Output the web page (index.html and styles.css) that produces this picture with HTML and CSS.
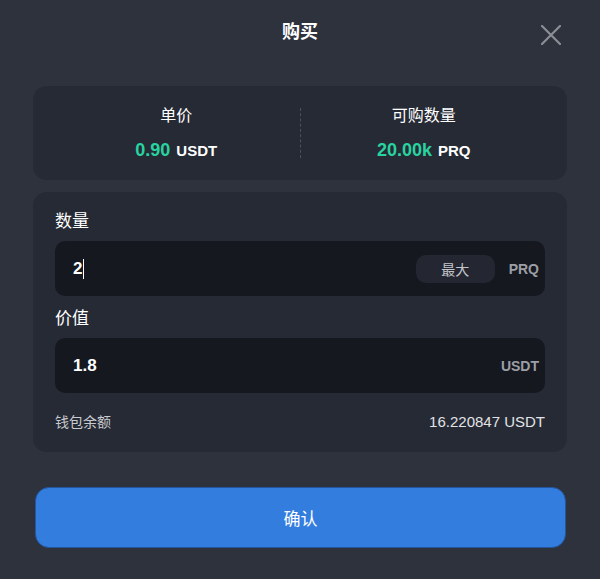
FILE: index.html
```html
<!DOCTYPE html>
<html lang="zh-CN">
    <head>
        <meta charset="UTF-8" />
        <meta name="viewport" content="width=device-width, initial-scale=1.0" />
        <title>购买</title>
        <link rel="stylesheet" href="styles.css">
    </head>
    <body>
        <div class="modal">
            <div class="header">
                <h1 class="title">购买</h1>
                <button class="close" aria-label="关闭">
                    <svg width="20" height="20" viewBox="0 0 20 20">
                        <path d="M1 1 L19 19 M19 1 L1 19" stroke="#8b8e95" stroke-width="2.2" stroke-linecap="round" fill="none" />
                    </svg>
                </button>
            </div>

            <div class="card summary">
                <div class="stat">
                    <div class="stat-label">单价</div>
                    <div class="stat-value"><span class="num">0.90</span><span class="unit">USDT</span></div>
                </div>
                <div class="divider"></div>
                <div class="stat">
                    <div class="stat-label">可购数量</div>
                    <div class="stat-value"><span class="num">20.00k</span><span class="unit">PRQ</span></div>
                </div>
            </div>

            <div class="card form">
                <div class="field">
                    <div class="field-label">数量</div>
                    <div class="input">
                        <div class="input-text">2<span class="caret"></span></div>
                        <button class="max">最大</button>
                        <span class="suffix">PRQ</span>
                    </div>
                </div>
                <div class="field second">
                    <div class="field-label">价值</div>
                    <div class="input">
                        <div class="input-text">1.8</div>
                        <span class="suffix">USDT</span>
                    </div>
                </div>
                <div class="balance">
                    <span>钱包余额</span>
                    <span class="balance-value">16.220847 USDT</span>
                </div>
            </div>

            <button class="confirm">确认</button>
        </div>
    </body>
</html>
```

FILE: styles.css
```css
body {
    margin: 0;
    background-color: #2d323d;
    font-family: "Liberation Sans", Arial, "Noto Sans CJK SC", sans-serif;
    color: #ffffff;
}
.modal {
    padding: 0 33px;
}
.header {
    height: 64px;
    display: flex;
    align-items: center;
    justify-content: center;
    position: relative;
    margin-bottom: 22px;
}
.title {
    margin: 0;
    font-size: 18px;
    font-weight: bold;
    line-height: 64px;
}
.close {
    position: absolute;
    right: 5px;
    top: 25px;
    width: 22px;
    height: 22px;
    padding: 0;
    border: none;
    background: none;
    cursor: pointer;
}
.card {
    background-color: #262a35;
    border-radius: 14px;
}
.summary {
    display: flex;
    align-items: center;
    height: 94px;
    padding: 0 20px;
}
.stat {
    flex: 1;
    text-align: center;
}
.stat-label {
    font-size: 16px;
    line-height: 22px;
}
.stat-value {
    margin-top: 12px;
    line-height: 22px;
}
.num {
    color: #28d3a0;
    font-size: 18px;
    font-weight: bold;
    margin-right: 6px;
}
.unit {
    font-size: 15px;
    font-weight: bold;
}
.divider {
    width: 0;
    height: 50px;
    border-left: 1px dashed #4b505b;
}
.form {
    margin-top: 12px;
    padding: 18px 22px 20px;
}
.field-label {
    font-size: 17px;
    line-height: 24px;
    margin-bottom: 7px;
}
.second {
    margin-top: 11px;
}
.input {
    display: flex;
    align-items: center;
    height: 55px;
    padding: 0 6px 0 18px;
    background-color: #15181f;
    border-radius: 10px;
}
.input-text {
    flex: 1;
    font-size: 17px;
    font-weight: bold;
    display: flex;
    align-items: center;
}
.caret {
    display: inline-block;
    width: 1px;
    height: 20px;
    background-color: #ffffff;
    margin-left: 1px;
}
.max {
    width: 79px;
    height: 28px;
    border: none;
    border-radius: 10px;
    background-color: #242731;
    color: #c3c5ca;
    font-family: inherit;
    font-size: 14px;
    margin-right: 14px;
    cursor: pointer;
}
.suffix {
    color: #9c9fa6;
    font-size: 14px;
    font-weight: bold;
}
.balance {
    display: flex;
    justify-content: space-between;
    margin-top: 19px;
    line-height: 20px;
    font-size: 14px;
    color: #c9cbd0;
}
.balance-value {
    font-size: 15px;
    color: #e2e3e6;
}
.confirm {
    display: block;
    width: 531px;
    height: 61px;
    margin: 35px 0 0 2px;
    background-color: #337ddf;
    border: 1px solid #23569f;
    border-radius: 14px;
    color: #ffffff;
    font-family: inherit;
    font-size: 17px;
    cursor: pointer;
}
```
